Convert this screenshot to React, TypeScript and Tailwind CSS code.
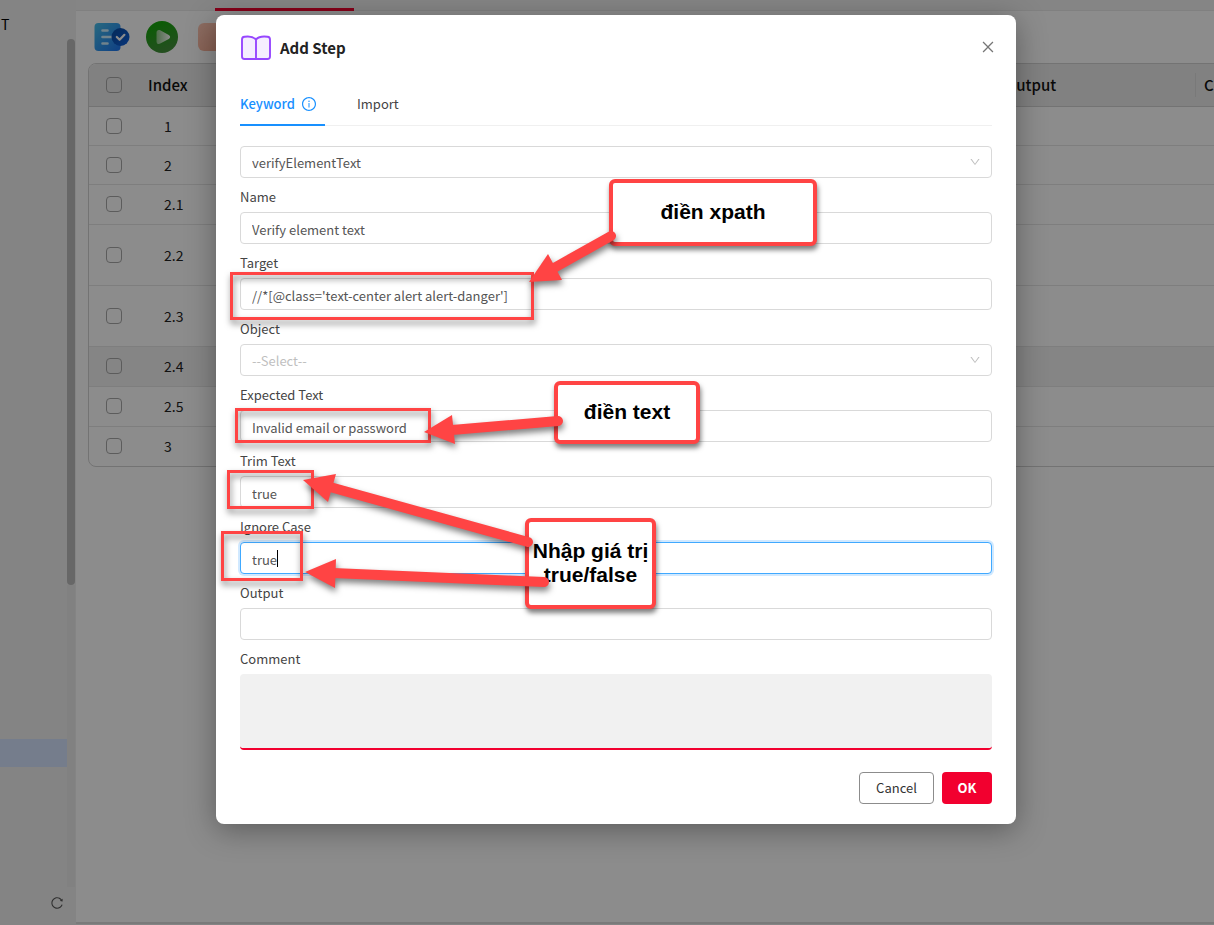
import { useId, type ReactNode } from "react";
import {
  AiOutlineClose,
  AiOutlineDown,
  AiOutlineInfoCircle,
  AiOutlineReload,
} from "react-icons/ai";

const rows = [
  { index: "1", height: "h-[39px]" },
  { index: "2", height: "h-[39px]" },
  { index: "2.1", height: "h-10" },
  { index: "2.2", height: "h-[61px]" },
  { index: "2.3", height: "h-[61px]" },
  { index: "2.4", height: "h-10", active: true },
  { index: "2.5", height: "h-10" },
  { index: "3", height: "h-10" },
];

function Checkbox({ label }: { label: string }) {
  return (
    <input
      type="checkbox"
      aria-label={label}
      className="block size-4 appearance-none rounded-[4px] border border-[#a8a8a8] bg-transparent"
    />
  );
}

function Sidebar() {
  return (
    <aside className="flex w-[76px] shrink-0 flex-col bg-[#f0f0f0]">
      <div className="flex grow">
        <div className="flex grow flex-col">
          <span className="mt-3 h-6 pl-px text-sm leading-6 text-black">T</span>
          <div className="mt-[703px] h-7 bg-[#d6e4ff]" />
        </div>
        <div className="flex w-2 flex-col">
          <div className="mt-[39px] h-[546px] rounded-full bg-[#bcbcbc]" />
          <div className="grow bg-[#ebebeb]" />
        </div>
        <div className="w-px" />
      </div>
      <div className="flex h-[38px] justify-end pt-[9px] pr-3">
        <button type="button" aria-label="Reload" className="size-3.5">
          <AiOutlineReload className="size-3.5 text-[#555]" />
        </button>
      </div>
    </aside>
  );
}

function Toolbar() {
  return (
    <div className="flex h-[52px] items-center gap-4 pl-[18px]">
      <button type="button" aria-label="Validate">
        <svg width="36" height="32" viewBox="0 0 36 32">
          <defs>
            <linearGradient id="doc" x1="0" y1="0" x2="1" y2="1">
              <stop offset="0" stopColor="#49c0ea" />
              <stop offset="1" stopColor="#1c74f0" />
            </linearGradient>
            <linearGradient id="seal" x1="0" y1="0" x2="1" y2="1">
              <stop offset="0" stopColor="#0a4ca0" />
              <stop offset="1" stopColor="#0f62e0" />
            </linearGradient>
          </defs>
          <rect x="0.5" y="2" width="26" height="28" rx="4" fill="url(#doc)" />
          <path
            d="M8.500 9.500h5M8.500 16h11M8.500 22.500h5"
            stroke="#cdeeff"
            strokeWidth="2.600"
            strokeLinecap="round"
          />
          <circle cx="26.500" cy="16" r="9" fill="url(#seal)" />
          <path
            d="M22.800 16l2.800 2.800 4.800-5"
            fill="none"
            stroke="#fff"
            strokeWidth="2.200"
            strokeLinecap="round"
            strokeLinejoin="round"
          />
        </svg>
      </button>
      <button type="button" aria-label="Run">
        <svg width="32" height="32" viewBox="0 0 32 32">
          <defs>
            <linearGradient id="run" x1="0" y1="0" x2="0.400" y2="1">
              <stop offset="0" stopColor="#0cac00" />
              <stop offset="1" stopColor="#42903a" />
            </linearGradient>
            <linearGradient id="play" x1="0" y1="0" x2="1" y2="0">
              <stop offset="0" stopColor="#8fc887" />
              <stop offset="1" stopColor="#fff" />
            </linearGradient>
          </defs>
          <circle cx="16" cy="16" r="16" fill="url(#run)" />
          <path
            d="M10.500 11.500c0-2.200 1.800-3.200 3.700-2.200l8.600 4.700c1.800 1 1.800 3 0 4l-8.600 4.600c-1.900 1-3.700 0-3.700-2.200z"
            fill="url(#play)"
          />
        </svg>
      </button>
      <button
        type="button"
        aria-label="Record"
        className="ml-1 h-7 w-8 rounded-md bg-gradient-to-br from-[#ffc7b4] to-[#f4a68c]"
      />
    </div>
  );
}

function StepTable() {
  return (
    <div className="ml-3 overflow-hidden">
      <div className="w-[calc(100%+200px)] overflow-hidden rounded-lg border border-[#d2d2d2]">
        <table className="w-full table-fixed border-collapse text-left text-sm text-[#222]">
          <colgroup>
            <col className="w-[50px]" />
            <col className="w-[180px]" />
            <col />
            <col className="w-[199px]" />
            <col className="w-[218px]" />
          </colgroup>
          <thead className="text-[15px] text-[#111]">
            <tr className="h-[42px] border-b border-[#d2d2d2] bg-[#ececec]">
              <th className="pl-[17px]">
                <Checkbox label="Select all steps" />
              </th>
              <th className="pl-[9px] font-medium">Index</th>
              <th />
              <th className="pl-[9px] font-medium">Output</th>
              <th className="p-0 font-medium">
                <div className="flex h-6 items-center border-l border-[#dcdcdc] pl-2">Comment</div>
              </th>
            </tr>
          </thead>
          <tbody>
            {rows.map((row) => (
              <tr
                key={row.index}
                className={`${row.height} border-b border-[#e6e6e6] last:border-b-0 ${row.active ? "bg-[#f3f3f3]" : ""}`}
              >
                <td className="pl-[17px]">
                  <Checkbox label={`Select step ${row.index}`} />
                </td>
                <td className="pl-[25px]">{row.index}</td>
                <td />
                <td />
                <td />
              </tr>
            ))}
          </tbody>
        </table>
      </div>
    </div>
  );
}

const control =
  "block h-8 w-full rounded-[4px] border bg-white px-[11px] pt-0.5 text-[13px] outline-none";

function Field({
  label,
  value = "",
  focused = false,
}: {
  label: string;
  value?: string;
  focused?: boolean;
}) {
  const id = useId();
  return (
    <div>
      <label htmlFor={id} className="flex h-[34px] items-center pt-1">
        {label}
      </label>
      <div className="relative">
        <input
          id={id}
          type="text"
          defaultValue={value}
          className={`${control} text-[#555] ${focused ? "border-[#40a9ff] ring-2 ring-[#1890ff]/20" : "border-[#d9d9d9]"}`}
        />
        {focused && <span className="absolute top-2 left-[37px] h-[17px] w-px bg-black" />}
      </div>
    </div>
  );
}

function SelectBox({ id, label, muted, children }: { id: string; label?: string; muted?: boolean; children: ReactNode }) {
  return (
    <div className="relative">
      <select
        id={id}
        aria-label={label}
        className={`${control} appearance-none border-[#d9d9d9] ${muted ? "text-[#bfbfbf]" : "text-[#555]"}`}
      >
        {children}
      </select>
      <AiOutlineDown className="pointer-events-none absolute top-2.5 right-[11px] size-3 text-[#bfbfbf]" />
    </div>
  );
}

const frames = [
  { x: 231.5, y: 273.5, w: 301, h: 45 },
  { x: 236.5, y: 409.5, w: 193, h: 32 },
  { x: 228.5, y: 471.5, w: 84, h: 36 },
  { x: 222.5, y: 532.5, w: 79, h: 47 },
];

const arrows = [
  { head: "529,282 548,254 562,280", line: "M611 236L554 268" },
  { head: "424,432 452,415 455,444", line: "M558 421L452 430" },
  { head: "303,480 336,474 328,502", line: "M528 542L330 487" },
  { head: "305,572 336,559 335,588", line: "M544 582L333 573" },
];

function Callout({ className, children }: { className: string; children: ReactNode }) {
  return (
    <div
      className={`absolute flex items-center justify-center rounded-md border-4 border-[#ff4444] bg-white pb-0.5 text-center font-['Liberation_Sans',sans-serif] text-[21px] leading-6 font-bold whitespace-nowrap text-black shadow-[1px_4px_5px_rgba(0,0,0,0.5)] ${className}`}
    >
      {children}
    </div>
  );
}

function Annotations() {
  return (
    <div className="pointer-events-none absolute inset-0">
      <Callout className="top-[164px] left-[393px] h-[67px] w-[208px]">điền xpath</Callout>
      <Callout className="top-[366px] left-[338px] h-[63px] w-[146px]">điền text</Callout>
      <Callout className="top-[503px] left-[309px] h-[91px] w-[131px]">
        Nhập giá trị
        <br />
        true/false
      </Callout>
      <svg
        className="absolute top-0 left-0 overflow-visible"
        width="800"
        height="809"
        viewBox="216 15 800 809"
      >
        <g className="drop-shadow-[1px_4px_3px_rgba(0,0,0,0.5)]">
          {frames.map((f) => (
            <rect
              key={f.y}
              x={f.x}
              y={f.y}
              width={f.w}
              height={f.h}
              fill="none"
              stroke="#ff4444"
              strokeWidth="3"
            />
          ))}
        </g>
        <g className="drop-shadow-[1px_4px_3px_rgba(0,0,0,0.5)]">
          {arrows.map((a) => (
            <g key={a.head}>
              <path d={a.line} stroke="#ff4444" strokeWidth="10" strokeLinecap="round" />
              <polygon points={a.head} fill="#ff4444" />
            </g>
          ))}
        </g>
      </svg>
    </div>
  );
}

function AddStepDialog() {
  return (
    <div
      role="dialog"
      aria-label="Add Step"
      className="relative w-[800px] rounded-lg bg-white px-6 pt-5 pb-5 text-[13px] text-[#444] shadow-[0_6px_30px_rgba(0,0,0,0.35)]"
    >
      <header className="flex h-[26px] items-center">
        <svg width="32" height="26" viewBox="0 0 32 26" className="shrink-0">
          <path
            d="M16 4.500C13.500 1.800 9 1.200 4.500 1.800 2.800 2 2 2.800 2 4.500v17c0 1.600.9 2.500 2.500 2.500h23c1.600 0 2.500-.9 2.500-2.500v-17c0-1.700-.8-2.500-2.500-2.700C23 1.200 18.500 1.800 16 4.500zM16 4.500V24"
            fill="#f5eeff"
            stroke="#9747ff"
            strokeWidth="1.900"
            strokeLinejoin="round"
          />
        </svg>
        <h1 className="ml-2 grow text-[15px] leading-6 font-semibold text-[#222]">Add Step</h1>
        <button type="button" aria-label="Close" className="-mr-1 pb-0.5 text-[#777]">
          <AiOutlineClose className="size-4" />
        </button>
      </header>

      <div role="tablist" className="mt-6 flex h-[41px] gap-8 border-b border-[#f0f0f0]">
        <button
          type="button"
          role="tab"
          aria-selected="true"
          className="flex h-[41px] w-[85px] items-center gap-1.5 border-b-2 border-[#1890ff] pb-0.5 text-[#1890ff]"
        >
          <span className="font-medium">Keyword</span>
          <AiOutlineInfoCircle className="size-4" />
        </button>
        <button type="button" role="tab" aria-selected="false" className="h-[39px] pb-0.5">
          Import
        </button>
      </div>

      <form className="mt-5">
        <SelectBox id="keyword" label="Keyword">
          <option>verifyElementText</option>
        </SelectBox>
        <Field label="Name" value="Verify element text" />
        <Field label="Target" value="//*[@class='text-center alert alert-danger']" />
        <label htmlFor="object" className="flex h-[34px] items-center pt-1">
          Object
        </label>
        <SelectBox id="object" muted>
          <option>--Select--</option>
        </SelectBox>
        <Field label="Expected Text" value="Invalid email or password" />
        <Field label="Trim Text" value="true" />
        <Field label="Ignore Case" value="true" focused />
        <Field label="Output" />
        <label htmlFor="comment" className="flex h-[34px] items-center pt-1">
          Comment
        </label>
        <textarea
          id="comment"
          className="block h-[76px] w-full resize-none rounded-[4px] border-b-2 border-[#f2002f] bg-[#f1f1f1] outline-none"
        />
        <div className="mt-[22px] flex justify-end gap-2">
          <button type="button" className="h-8 w-[75px] rounded-[4px] border border-[#8c8c8c] text-[#333]">
            Cancel
          </button>
          <button type="button" className="h-8 w-[50px] rounded-[4px] bg-[#f2002f] font-bold text-white">
            OK
          </button>
        </div>
      </form>
      <Annotations />
    </div>
  );
}

export default function App() {
  return (
    <div className="relative min-h-screen overflow-hidden font-['Noto_Sans_CJK_SC','Noto_Sans',sans-serif]">
      <div className="flex min-h-screen">
        <Sidebar />
        <main className="flex min-w-0 grow flex-col bg-white">
          <div className="h-[11px] border-b border-[#eaeaea] bg-[#f3f3f3] pt-2 pl-[139px]">
            <div className="h-[3px] w-[139px] bg-[#f2002f]" />
          </div>
          <Toolbar />
          <StepTable />
          <div className="mt-auto h-[3px] border-t-2 border-[#dedede] bg-[#f0f0f0]" />
        </main>
      </div>
      <div className="absolute inset-0 flex items-start justify-center bg-black/45 pt-[15px] pl-[18px]">
        <AddStepDialog />
      </div>
    </div>
  );
}
